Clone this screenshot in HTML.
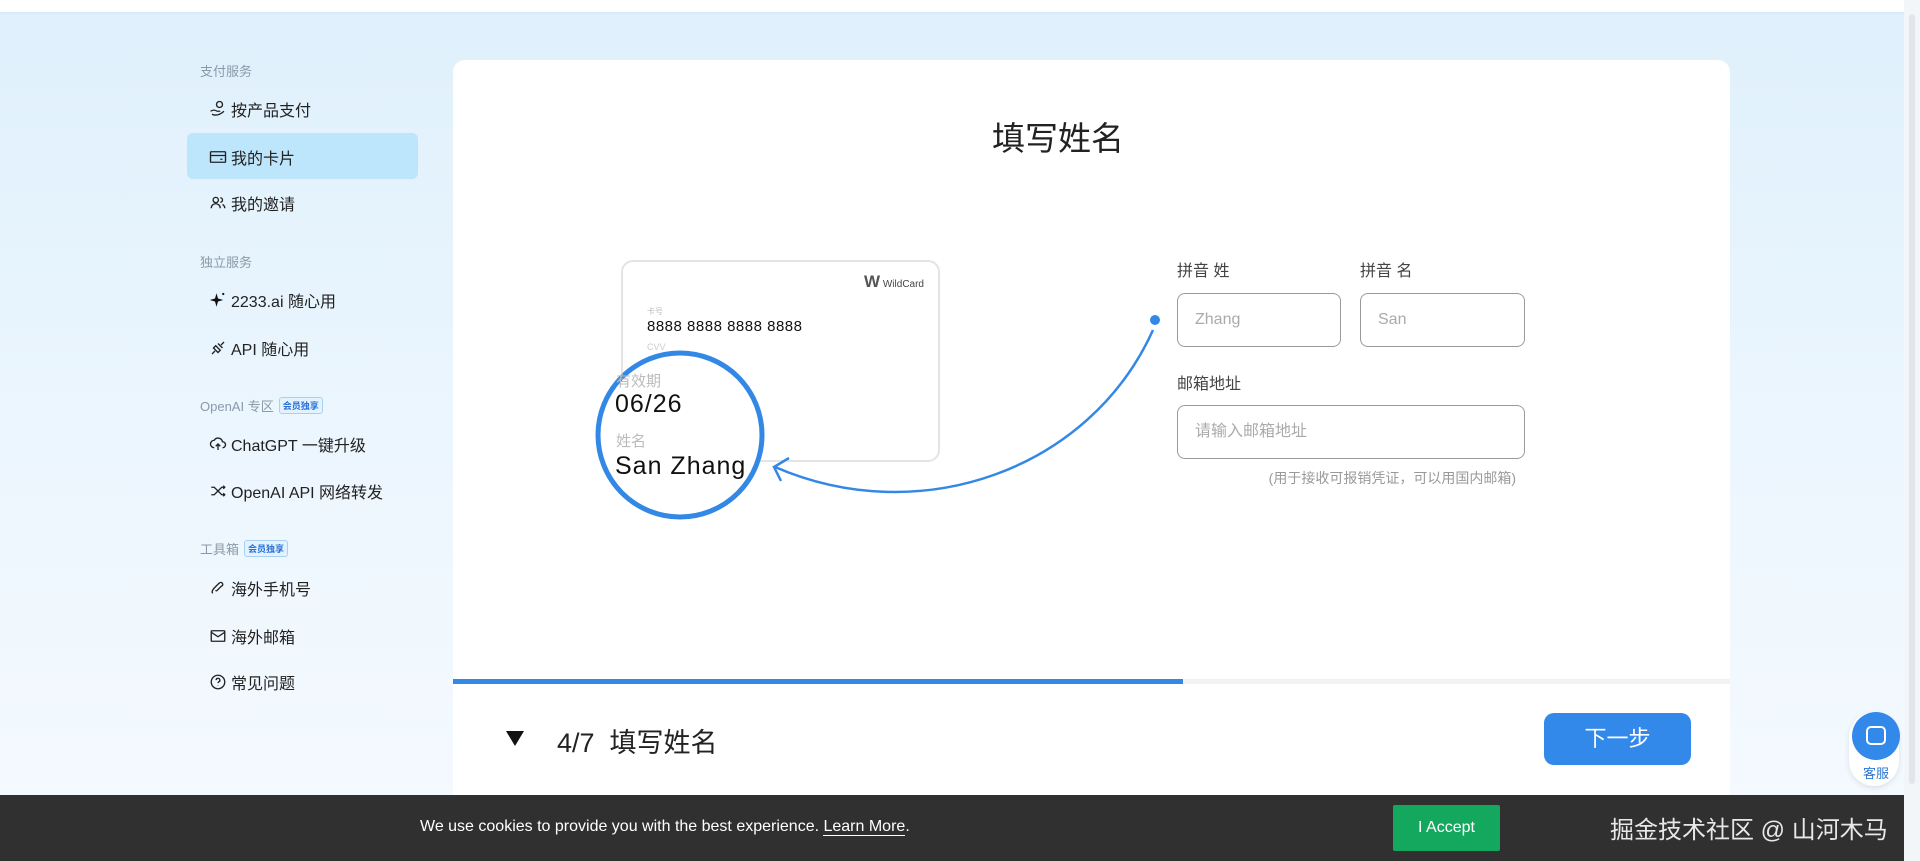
<!DOCTYPE html>
<html><head><meta charset="utf-8"><style>
*{margin:0;padding:0;box-sizing:border-box}
body{width:1920px;height:861px;overflow:hidden;font-family:"Liberation Sans","Noto Sans CJK SC",sans-serif;background:linear-gradient(180deg,#dff0fc 0%,#eef7fe 60%,#f5faff 100%);position:relative;color:#222}
.top{position:absolute;left:0;top:0;width:1904px;height:12px;background:#fff;box-shadow:0 1px 3px rgba(0,0,0,.05)}
.sb{position:absolute;right:0;top:0;width:16px;height:861px;background:#f3f6f9}
.sb div{position:absolute;left:5px;top:14px;width:6px;height:770px;background:#e2e6ea;border-radius:3px}
.grp{position:absolute;left:200px;font-size:13px;color:#8a9aa8}
.badge{display:inline-block;font-size:9px;color:#2a6fd6;border:1px solid #a8d0f5;background:#e3f2ff;border-radius:3px;padding:1px 3px;margin-left:5px;vertical-align:2px;font-weight:bold}
.it{position:absolute;left:209px;font-size:16px;color:#222;display:flex;align-items:center;height:24px}
.it svg{width:18px;height:18px;margin-right:4px;fill:none;stroke:#222;stroke-width:1.8}
.sel{position:absolute;left:187px;top:133px;width:231px;height:46px;background:#bde5fb;border-radius:6px}
.main{position:absolute;left:453px;top:60px;width:1277px;height:760px;background:#fff;border-radius:12px}
.title{position:absolute;left:0;width:1210px;top:52px;text-align:center;font-size:33px;color:#222}
.card{position:absolute;left:621px;top:260px;width:319px;height:202px;border:2px solid #e4e4e4;border-radius:12px;background:#fff}
.lbl{position:absolute;font-size:16px;color:#444}
.inp{position:absolute;border:1px solid #999;border-radius:8px;height:54px;font-size:16px;color:#aaa;padding-left:17px;line-height:52px}
.prog{position:absolute;left:453px;top:679px;width:1277px;height:5px;background:#f2f2f2}
.prog div{width:730px;height:5px;background:#3388e6}
.btn{position:absolute;left:1544px;top:713px;width:147px;height:52px;background:#3289ea;border-radius:10px;color:#fff;font-size:22px;text-align:center;line-height:52px}
.cookie{position:absolute;left:0;top:795px;width:1904px;height:66px;background:#303030}
</style></head><body>
<div class="top"></div>
<div class="sel"></div>
<div class="grp" style="top:61px">支付服务</div>
<div class="it" style="top:97px"><svg viewBox="0 0 24 24"><circle cx="14" cy="6" r="4"/><path d="M2 15c3-2 6-2 9 0h4M4 19c4 2 9 2 16-4"/></svg>按产品支付</div>
<div class="it" style="top:145px"><svg viewBox="0 0 24 24"><rect x="2" y="5" width="20" height="14" rx="1"/><path d="M2 10h20M15 15h3"/></svg>我的卡片</div>
<div class="it" style="top:191px"><svg viewBox="0 0 24 24"><circle cx="9" cy="8" r="3.5"/><path d="M3 19c0-4 3-6 6-6s6 2 6 6M15 5a3 3 0 0 1 0 6M18 14c2 1 3 3 3 5"/></svg>我的邀请</div>
<div class="grp" style="top:252px">独立服务</div>
<div class="it" style="top:288px"><svg viewBox="0 0 24 24" style="fill:#111;stroke:none"><path d="M10 3l2 7 7 2-7 2-2 7-2-7-7-2 7-2z"/><circle cx="19" cy="4" r="1.5"/></svg>2233.ai 随心用</div>
<div class="it" style="top:336px"><svg viewBox="0 0 24 24"><path d="M4 20l4-4M20 4l-4 4M6 12l6 6 3-3-6-6zM12 6l6 6"/></svg>API 随心用</div>
<div class="grp" style="top:396px">OpenAI 专区<span class="badge">会员独享</span></div>
<div class="it" style="top:432px"><svg viewBox="0 0 24 24"><path d="M7 17a5 5 0 0 1 0-10 6 6 0 0 1 11 2 4 4 0 0 1 0 8M12 20v-8M9 15l3-3 3 3"/></svg>ChatGPT 一键升级</div>
<div class="it" style="top:479px"><svg viewBox="0 0 24 24"><path d="M3 7h4l10 10h4M3 17h4l10-10h4M19 5l2 2-2 2M19 15l2 2-2 2"/></svg>OpenAI API 网络转发</div>
<div class="grp" style="top:539px">工具箱<span class="badge">会员独享</span></div>
<div class="it" style="top:576px"><svg viewBox="0 0 24 24"><path d="M5 19c-2-2 0-5 3-8l5-5c2-2 4-2 5 0s0 3-2 4l-5 5c-1 1-2 1-2 0"/></svg>海外手机号</div>
<div class="it" style="top:624px"><svg viewBox="0 0 24 24"><rect x="3" y="5" width="18" height="14" rx="1"/><path d="M3 7l9 6 9-6"/></svg>海外邮箱</div>
<div class="it" style="top:670px"><svg viewBox="0 0 24 24"><circle cx="12" cy="12" r="9"/><path d="M9.5 9.5a2.5 2.5 0 1 1 3.5 2.3c-.7.3-1 .8-1 1.7M12 16.5v.5"/></svg>常见问题</div>

<div class="main"><div class="title">填写姓名</div></div>
<div class="card">
 <div style="position:absolute;right:14px;top:10px;font-size:10px;color:#444"><b style="font-size:17px;color:#555">W</b> WildCard</div>
 <div style="position:absolute;left:24px;top:44px;font-size:8px;color:#bbb">卡号</div>
 <div style="position:absolute;left:24px;top:56px;font-size:15px;color:#111;letter-spacing:.5px">8888 8888 8888 8888</div>
 <div style="position:absolute;left:24px;top:80px;font-size:9px;color:#ccc">CVV</div>
</div>
<svg style="position:absolute;left:0;top:0" width="1920" height="861">
 <circle cx="680" cy="435" r="82" fill="#fff" stroke="#3388e6" stroke-width="5"/>
 <path d="M1153 330C1090 470 920 530 775 467" fill="none" stroke="#3388e6" stroke-width="2.5"/>
 <path d="M789 458L774 467L781 481" fill="none" stroke="#3388e6" stroke-width="2.5"/>
 <circle cx="1155" cy="320" r="5" fill="#3388e6"/>
</svg>
<div style="position:absolute;left:616px;top:370px;font-size:15px;color:#bbb">有效期</div>
<div style="position:absolute;left:615px;top:390px;font-size:25px;color:#111;letter-spacing:1px">06/26</div>
<div style="position:absolute;left:616px;top:430px;font-size:15px;color:#bbb">姓名</div>
<div style="position:absolute;left:615px;top:452px;font-size:25px;color:#111;letter-spacing:1px">San Zhang</div>

<div class="lbl" style="left:1177px;top:257px">拼音 姓</div>
<div class="lbl" style="left:1360px;top:257px">拼音 名</div>
<div class="inp" style="left:1177px;top:293px;width:164px">Zhang</div>
<div class="inp" style="left:1360px;top:293px;width:165px">San</div>
<div class="lbl" style="left:1177px;top:370px">邮箱地址</div>
<div class="inp" style="left:1177px;top:405px;width:348px">请输入邮箱地址</div>
<div style="position:absolute;left:1240px;top:468px;font-size:14px;color:#999;width:276px;text-align:right">(用于接收可报销凭证，可以用国内邮箱)</div>

<div class="prog"><div></div></div>
<div style="position:absolute;left:506px;top:731px;width:0;height:0;border-left:9px solid transparent;border-right:9px solid transparent;border-top:15px solid #111"></div>
<div style="position:absolute;left:557px;top:721px;font-size:27px;color:#222">4/7&nbsp;&nbsp;填写姓名</div>
<div class="btn">下一步</div>
<div style="position:absolute;left:1849px;top:712px;width:50px;height:74px;background:#fff;border-radius:25px;box-shadow:0 2px 6px rgba(0,0,0,.1)"></div>
<div style="position:absolute;left:1852px;top:712px;width:48px;height:48px;border-radius:50%;background:#3289ea"></div>
<div style="position:absolute;left:1866px;top:726px;width:20px;height:19px;border:2px solid #fff;border-radius:5px"></div>
<div style="position:absolute;left:1850px;top:763px;width:52px;text-align:center;font-size:13px;color:#2b76d2">客服</div>

<div class="cookie">
 <div style="position:absolute;left:420px;top:23px;font-size:16px;color:#fff">We use cookies to provide you with the best experience. <span style="border-bottom:1px solid #fff">Learn More</span>.</div>
 <div style="position:absolute;left:1393px;top:10px;width:107px;height:46px;background:#14a85e;color:#fff;font-size:16px;text-align:center;line-height:46px;border-radius:2px">I Accept</div>
 <div style="position:absolute;left:1610px;top:15px;font-size:24px;color:#e8e8e8">掘金技术社区 @ 山河木马</div>
</div>
<div class="sb"><div></div></div>
</body></html>
